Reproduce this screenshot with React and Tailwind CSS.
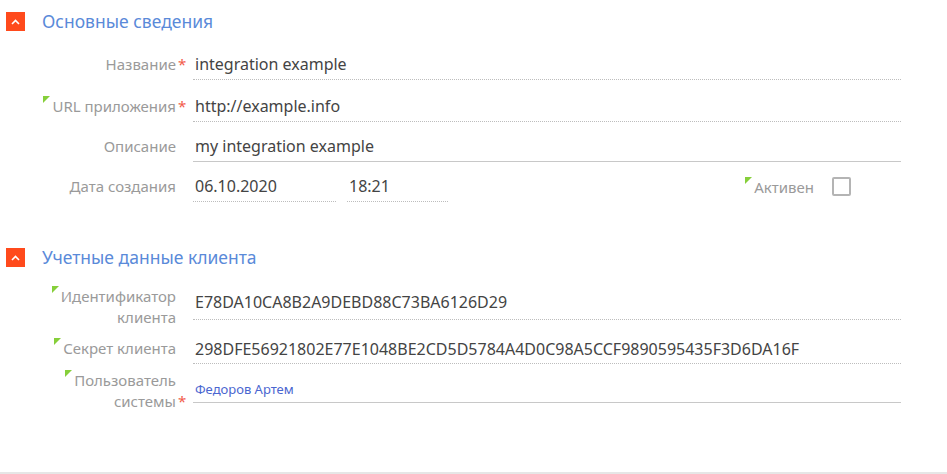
import React from "react";

const Tri = () => (
  <svg width="7" height="7" viewBox="0 0 7 7" className="inline-block align-top mr-[2px]">
    <path d="M0 0H7L0 7Z" fill="#86cf3a" />
  </svg>
);

const Chevron = () => (
  <div className="w-[19px] h-[19px] bg-[#ff4a1c] flex items-center justify-center shrink-0">
    <svg width="9" height="6" viewBox="0 0 9 6">
      <path d="M1 5L4.5 1.5L8 5" stroke="#fff" strokeWidth="1.6" fill="none" />
    </svg>
  </div>
);

const Star = () => (
  <span className="inline-block w-0 whitespace-nowrap text-left">
    <span className="ml-[2px] text-[#f25b4a]">*</span>
  </span>
);

function Header({ title, className }) {
  return (
    <div className={"flex items-center h-[19px] pl-[6px] " + className}>
      <Chevron />
      <div className="ml-[17px] text-[17.5px] leading-[19px] text-[#5a8ad9]">{title}</div>
    </div>
  );
}

function Label({ children, tri, req }) {
  return (
    <div className="w-[176px] shrink-0 flex justify-end pl-[30px]">
      <div className="text-right text-[15px] leading-[21px] text-[#9a9a9a]">
        {tri && <Tri />}
        {children}
        {req && <Star />}
      </div>
    </div>
  );
}

const val = "text-[16px] leading-[20px] text-[#444]";

function Row({ label, tri, req, value, solid, className }) {
  return (
    <div className={"flex items-center " + className}>
      <Label tri={tri} req={req}>{label}</Label>
      <div
        className={
          "ml-[17px] w-[708px] h-[32px] flex items-center pl-[2px] border-b " +
          val +
          " " +
          (solid ? "border-solid border-[#c8c8c8]" : "border-dotted border-[#bdbdbd]")
        }
      >
        {value}
      </div>
    </div>
  );
}

export default function App() {
  return (
    <div
      className="w-[947px] h-[474px] flex flex-col bg-white overflow-hidden"
      style={{ fontFamily: '"Noto Sans", "Open Sans", sans-serif' }}
    >
      <Header title="Основные сведения" className="mt-[12px]" />
      <Row className="mt-[17px]" label="Название" req value="integration example" />
      <Row className="mt-[10px]" label="URL приложения" tri req value="http://example.info" />
      <Row className="mt-[8px]" label="Описание" solid value="my integration example" />
      <div className="flex items-center mt-[8px]">
        <Label>Дата создания</Label>
        <div className="ml-[17px] w-[708px] flex items-center">
          <div className={"w-[143px] h-[32px] flex items-center pl-[2px] border-b border-dotted border-[#bdbdbd] " + val}>
            06.10.2020
          </div>
          <div className={"ml-[11px] w-[101px] h-[32px] flex items-center pl-[2px] border-b border-dotted border-[#bdbdbd] " + val}>
            18:21
          </div>
          <div className="ml-auto mr-[50px] flex items-center">
            <div className="text-[15px] leading-[21px] text-[#9a9a9a] mt-[3px]">
              <Tri />
              Активен
            </div>
            <div className="ml-[18px] w-[19px] h-[19px] border-2 border-[#b4b4b4] rounded-[2px] bg-white" />
          </div>
        </div>
      </div>

      <Header title="Учетные данные клиента" className="mt-[46px]" />

      <div className="flex items-start mt-[19px]">
        <Label tri>Идентификатор клиента</Label>
        <div className={"ml-[17px] w-[708px] h-[34px] pt-[6px] pl-[2px] border-b border-dotted border-[#bdbdbd] " + val}>
          E78DA10CA8B2A9DEBD88C73BA6126D29
        </div>
      </div>
      <div className="flex items-start mt-[5px]">
        <div className="mt-[5px]">
          <Label tri>Секрет клиента</Label>
        </div>
        <div className={"ml-[17px] w-[708px] h-[31px] pt-[6px] pl-[2px] border-b border-dotted border-[#bdbdbd] " + val}>
          298DFE56921802E77E1048BE2CD5D5784A4D0C98A5CCF9890595435F3D6DA16F
        </div>
      </div>
      <div className="flex items-start mt-[6px]">
        <Label tri req>Пользователь системы</Label>
        <div className="ml-[17px] w-[708px] h-[33px] flex items-end pb-[4px] pl-[2px] text-[13px] leading-[18px] text-[#4a66d0] border-b border-solid border-[#c8c8c8]">
          Федоров Артем
        </div>
      </div>

      <div className="mt-auto h-[2px] bg-[#e6e6e6]" />
    </div>
  );
}
